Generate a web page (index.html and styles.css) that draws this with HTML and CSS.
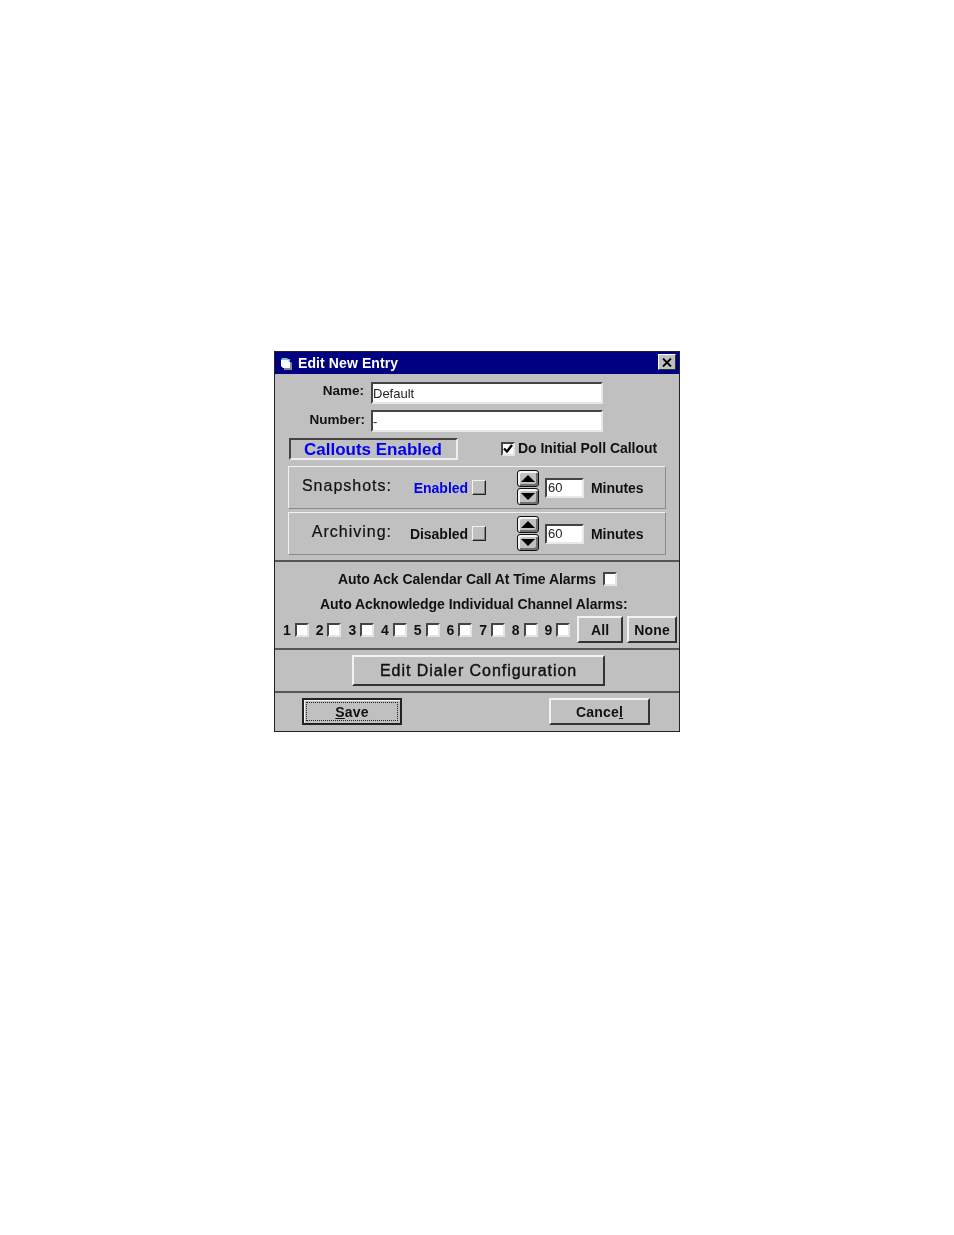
FILE: index.html
```html
<!DOCTYPE html>
<html lang="en">
<head>
<meta charset="utf-8">
<title>Edit New Entry</title>
<link rel="stylesheet" href="styles.css">
</head>
<body>
<div class="window">
  <div class="titlebar">
    <svg class="app-icon" width="12" height="12" viewBox="0 0 12 12"><path d="M0 2l1-2h5l1 1h2v2H0z" fill="#5fd0c8"/><path d="M0 2h7l2 2v6H2L0 8z" fill="#fff"/><path d="M9 4h1l1 1v7H3v-2h6z" fill="#8a8a8a"/></svg>
    <span class="title">Edit New Entry</span>
    <span class="close"><svg width="10" height="9" viewBox="0 0 10 9"><path d="M1 .5l8 8M9 .5l-8 8" fill="none" stroke="#000" stroke-width="1.8"/></svg></span>
  </div>

  <section class="sec sec-main">
    <div class="field"><label class="lbl">Name:</label><input class="text wide" value="Default"></div>
    <div class="field field2"><label class="lbl lbl2">Number:</label><input class="text wide" value="-"></div>
    <div class="callrow">
      <div class="callouts">Callouts Enabled</div>
      <span class="check checked"><svg width="10" height="10" viewBox="0 0 10 10"><path d="M1 4.500l3 3 5-6.500" fill="none" stroke="#000" stroke-width="2.400"/></svg></span>
      <span class="b13 polltext">Do Initial Poll Callout</span>
    </div>
    <div class="group">
      <span class="grouplabel">Snapshots:</span>
      <span class="b13 status blue">Enabled</span>
      <span class="toggle"></span>
      <div class="spinner"><span class="spin"><i class="up"></i></span><span class="spin"><i class="down"></i></span></div>
      <input class="text mins" value="60">
      <span class="b13 minlabel">Minutes</span>
    </div>
    <div class="group group2">
      <span class="grouplabel">Archiving:</span>
      <span class="b13 status">Disabled</span>
      <span class="toggle"></span>
      <div class="spinner"><span class="spin"><i class="up"></i></span><span class="spin"><i class="down"></i></span></div>
      <input class="text mins" value="60">
      <span class="b13 minlabel">Minutes</span>
    </div>
  </section>

  <section class="sec sec-alarms">
    <div class="ackrow"><span class="b13">Auto Ack Calendar Call At Time Alarms</span><span class="check"></span></div>
    <div class="indiv b13">Auto Acknowledge Individual Channel Alarms:</div>
    <div class="channels">
      <span class="chan b13">1<span class="check"></span></span>
      <span class="chan b13">2<span class="check"></span></span>
      <span class="chan b13">3<span class="check"></span></span>
      <span class="chan b13">4<span class="check"></span></span>
      <span class="chan b13">5<span class="check"></span></span>
      <span class="chan b13">6<span class="check"></span></span>
      <span class="chan b13">7<span class="check"></span></span>
      <span class="chan b13">8<span class="check"></span></span>
      <span class="chan b13">9<span class="check"></span></span>
      <button class="btn btn-all">All</button>
      <button class="btn btn-none">None</button>
    </div>
  </section>

  <section class="sec sec-dialer">
    <button class="btn btn-dialer">Edit Dialer Configuration</button>
  </section>

  <section class="sec-foot">
    <button class="btn btn-save"><span class="focus"><u>S</u>ave</span></button>
    <button class="btn btn-cancel">Cance<u>l</u></button>
  </section>
</div>
</body>
</html>
```
FILE: styles.css
```css
* { box-sizing: border-box; }
html, body { margin: 0; background: #fff; }
body { padding: 351px 0 0 274px; height: 1235px; overflow: hidden; font-family: "Liberation Sans", Arial, sans-serif; color: #111; }

.window { width: 406px; height: 381px; background: #c0c0c0; border: 1px solid #222; display: flex; flex-direction: column; filter: blur(.4px); }

.titlebar { height: 22px; background: #000080; color: #fff; display: flex; align-items: center; padding: 0 3px 0 6px; flex: none; }
.app-icon { margin-top: 2px; }
.title { font-size: 14px; font-weight: 700; margin-left: 5px; margin-top: -1px; letter-spacing: .1px; }
.close { margin-left: auto; width: 18px; height: 16px; margin-top: -2px; background: #c0c0c0; border: 1px solid; border-color: #fff #333 #333 #fff; display: flex; align-items: center; justify-content: center; }

.b13 { font-size: 14px; font-weight: 700; letter-spacing: -.04px; white-space: nowrap; }

.sec { border-bottom: 2px solid #555; flex: none; }
.sec-main { height: 188px; padding: 8px 0 0 13px; }
.field { display: flex; height: 22px; }
.field2 { margin-top: 6px; }
.lbl { width: 76px; margin-right: 7px; text-align: right; font-size: 13.500px; font-weight: 700; line-height: 18px; }
.lbl2 { width: 77px; margin-right: 6px; line-height: 20px; }
.text { border: 2px solid; border-color: #444 #e8e8e8 #e8e8e8 #444; background: #fff; padding: 0 0 0 1px; font: 13px "Liberation Sans", Arial, sans-serif; color: #222; outline: 0; border-radius: 0; }
.wide { width: 232px; height: 22px; padding-left: 0; }

.callrow { display: flex; align-items: flex-start; margin-top: 6px; height: 22px; }
.callouts { width: 169px; height: 22px; margin-left: 1px; border: 2px solid; border-color: #444 #eee #eee #444; color: #0000ee; font-size: 17px; font-weight: 700; line-height: 20px; padding-left: 13px; white-space: nowrap; }
.check { width: 14px; height: 14px; flex: none; background: #fff; border: 2px solid; border-color: #444 #e4e4e4 #e4e4e4 #444; display: inline-flex; align-items: center; justify-content: center; }
.checked { margin: 4px 0 0 43px; }
.polltext { margin: 1px 0 0 3px; line-height: 18px; }

.group { width: 378px; height: 43px; margin-top: 6px; border: 1px solid; border-color: #f2f2f2 #8a8a8a #8a8a8a #f2f2f2; display: grid; grid-template-columns: 103px 76px 18px 31px 22px 6px 39px 7px auto; align-items: center; }
.group2 { margin-top: 3px; }
.grouplabel { text-align: right; font-size: 16px; letter-spacing: 1px; grid-column: 1; margin-top: -3px; -webkit-text-stroke: .2px #111; }
.status { grid-column: 2; text-align: right; }
.blue { color: #0000ee; }
.toggle { grid-column: 3; justify-self: end; width: 14px; height: 15px; background: #c0c0c0; border: 1px solid; border-color: #f2f2f2 #222 #222 #f2f2f2; box-shadow: inset -1px -1px 0 #808080; }
.spinner { grid-column: 5; display: flex; flex-direction: column; gap: 1px; margin-top: -1px; }
.spin { width: 22px; height: 17px; background: #c0c0c0; border: 1px solid #111; border-radius: 3px; box-shadow: inset 2px 2px 0 #f4f4f4, inset -2px -2px 0 #707070; display: flex; align-items: center; justify-content: center; }
.up, .down { width: 0; height: 0; border-left: 7px solid transparent; border-right: 7px solid transparent; }
.up { border-bottom: 7px solid #000; }
.down { border-top: 7px solid #000; }
.mins { grid-column: 7; width: 39px; height: 20px; }
.minlabel { grid-column: 9; }

.sec-alarms { height: 88px; padding-top: 9px; }
.ackrow { display: flex; align-items: center; height: 16px; margin-left: 63px; gap: 7px; }
.indiv { margin: 9px 0 0 45px; height: 16px; line-height: 16px; }
.channels { display: flex; align-items: center; margin: 4px 0 0 8px; height: 27px; }
.chan { width: 32.700px; display: flex; align-items: center; gap: 4px; flex: none; }
.btn { background: #c0c0c0; border: 2px solid; border-color: #f2f2f2 #333 #333 #f2f2f2; font: 700 14px "Liberation Sans", Arial, sans-serif; color: #111; padding: 0; letter-spacing: .2px; border-radius: 0; }
.btn-all { width: 46px; height: 27px; }
.btn-none { width: 50px; height: 27px; margin-left: 4px; }

.sec-dialer { height: 43px; padding: 5px 0 0 77px; }
.btn-dialer { width: 253px; height: 31px; font-size: 16px; font-weight: 400; -webkit-text-stroke: .4px #111; letter-spacing: .95px; }

.sec-foot { flex: 1; display: flex; justify-content: space-between; align-items: flex-start; padding: 5px 29px 0 27px; }
.btn-save { width: 100px; height: 27px; border: 2px solid #222; box-shadow: inset 1px 1px 0 #f2f2f2; padding: 2px; }
.focus { display: block; height: 100%; border: 1px dotted #222; line-height: 19px; }
.btn-cancel { width: 101px; height: 27px; }
```
